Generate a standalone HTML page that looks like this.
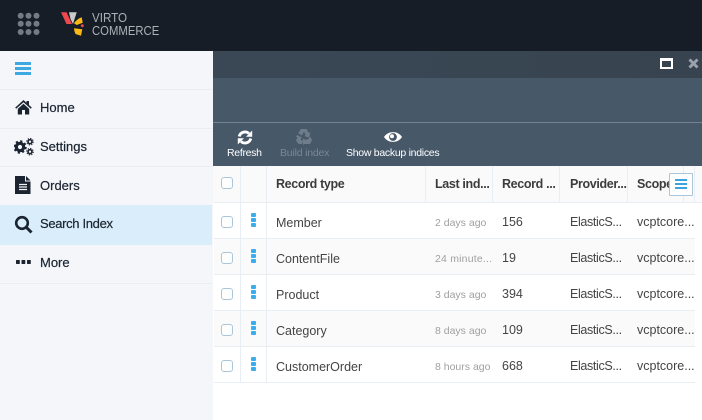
<!DOCTYPE html>
<html><head><meta charset="utf-8"><style>
*{box-sizing:border-box}
html,body{margin:0;padding:0;width:702px;height:420px;overflow:hidden;background:#fff;font-family:"Liberation Sans",sans-serif}
.a{position:absolute}
.t{position:absolute;white-space:nowrap;line-height:16px}
.nav{font-size:13px;color:#1b2430;left:40px;-webkit-text-stroke:.2px #1b2430}
.hl{position:absolute;left:0;width:213px;height:1px;background:#e9edf4}
.tb{font-size:10.5px;color:#fff;top:146px;line-height:14px}
.th{font-size:12.5px;font-weight:bold;color:#3c3c3c;top:176px;letter-spacing:-.35px}
.td{font-size:12.5px;color:#444}
.e{letter-spacing:-.35px}
.sm{font-size:10.5px;color:#a0a0a0}
.cb{position:absolute;left:221px;width:12px;height:12px;border:1.3px solid #a9c6dc;border-radius:3px;background:#fff}
.dot{position:absolute;left:251px;width:5px;height:4.4px;background:#3aaee8;border-radius:1px}
.vl{position:absolute;width:1px;background:#e9edf4}
.row{position:absolute;left:214px;width:481px;height:36px;border-bottom:1px solid #e9edf4}
</style></head><body>
<div class="a" style="left:0;top:0;width:702px;height:51px;background:#161d27"></div>
<svg class="a" style="left:17px;top:12px" width="24" height="24" fill="#747b84"><circle cx="3.700" cy="3.700" r="3"/><circle cx="11.500" cy="3.700" r="3"/><circle cx="19.500" cy="3.700" r="3"/><circle cx="3.700" cy="11.700" r="3"/><circle cx="11.500" cy="11.700" r="3"/><circle cx="19.500" cy="11.700" r="3"/><circle cx="3.700" cy="20" r="3"/><circle cx="11.500" cy="20" r="3"/><circle cx="19.500" cy="20" r="3"/></svg>
<svg class="a" style="left:60px;top:11px" width="28" height="26"><path d="M1 1.300H6.500L12 13H6.500Z" fill="#f1484f"/><path d="M9 1.300H16.700L13 13L10.500 8Z" fill="#c9c9c9"/><path d="M14 12.300Q17 8 21.700 6.300L22.700 11.700L16.700 14Z" fill="#fdb913"/><path d="M14 17.300L22.300 18.300L21 24.700L15.500 23Q14 20 14 17.300Z" fill="#fdb913"/><circle cx="22.300" cy="14.700" r="1.500" fill="#f1484f"/></svg>
<div class="t" style="left:92px;top:10px;font-size:12.500px;color:#adb1b6;transform:scaleX(.93);transform-origin:left">VIRTO</div>
<div class="t" style="left:92px;top:23px;font-size:12.500px;color:#adb1b6;transform:scaleX(.905);transform-origin:left">COMMERCE</div>

<div class="a" style="left:0;top:51px;width:213px;height:369px;background:#f4f6fa"></div>
<div class="a" style="left:0;top:205px;width:212px;height:40px;background:#d9eefa"></div>
<div class="hl" style="top:89px"></div><div class="hl" style="top:128px"></div><div class="hl" style="top:166px"></div><div class="hl" style="top:283px"></div>
<svg class="a" style="left:15px;top:62px" width="17" height="14" fill="#3ea9e0"><rect width="16" height="3" y="0"/><rect width="16" height="3" y="5"/><rect width="16" height="3" y="10"/></svg>
<svg class="a" style="left:15px;top:100px" width="17" height="15" fill="#1b2430"><path d="M8.500 0L11.500 2.700V1H14V5L16.800 7.600L15.800 8.800L8.500 2.200L1.200 8.800L.2 7.600Z"/><path d="M8.500 3.800L14.200 8.900V14.500H10V10H7V14.500H2.800V8.900Z"/></svg>
<svg class="a" style="left:14px;top:137px" width="20" height="20"><circle cx="6" cy="10" r="3.700" fill="none" stroke="#1b2430" stroke-width="3.200"/><circle cx="6" cy="10" r="5.800" fill="none" stroke="#1b2430" stroke-width="1.800" stroke-dasharray="2.200 2.350"/><circle cx="16" cy="4.700" r="2" fill="none" stroke="#1b2430" stroke-width="1.600"/><circle cx="16" cy="4.700" r="3.300" fill="none" stroke="#1b2430" stroke-width="1" stroke-dasharray="1.300 1.300"/><circle cx="16" cy="14.700" r="2" fill="none" stroke="#1b2430" stroke-width="1.600"/><circle cx="16" cy="14.700" r="3.300" fill="none" stroke="#1b2430" stroke-width="1" stroke-dasharray="1.300 1.300"/></svg>
<svg class="a" style="left:15px;top:176px" width="16" height="18"><path d="M0 0H10V5.500H15.500V18H0Z" fill="#1b2430"/><path d="M11 0L15.500 4.500H11Z" fill="#1b2430"/><path d="M4 8.500H12M4 11H12M4 13.500H12" stroke="#f4f6fa" stroke-width="1.200"/></svg>
<svg class="a" style="left:14px;top:215px" width="19" height="19" fill="none" stroke="#1b2430"><circle cx="8" cy="8" r="5.800" stroke-width="2.600"/><path d="M12.500 12.500L17.500 17.500" stroke-width="3"/></svg>
<svg class="a" style="left:16px;top:260px" width="15" height="5" fill="#1b2430"><rect width="3.800" height="4" rx=".6"/><rect x="5.500" width="3.800" height="4" rx=".6"/><rect x="11" width="3.800" height="4" rx=".6"/></svg>
<div class="t nav" style="top:100px">Home</div>
<div class="t nav" style="top:139px">Settings</div>
<div class="t nav" style="top:178px">Orders</div>
<div class="t nav" style="top:216px;letter-spacing:-.33px">Search Index</div>
<div class="t nav" style="top:255px">More</div>

<div class="a" style="left:213px;top:51px;width:489px;height:27px;background:linear-gradient(90deg,#3a4856,#37444f)"></div>
<div class="a" style="left:213px;top:78px;width:489px;height:88px;background:#475869"></div>
<div class="a" style="left:213px;top:122px;width:489px;height:1px;background:#76828f"></div>
<div class="a" style="left:660px;top:58px;width:13px;height:11px;border:2px solid #fff;border-top-width:3px;background:#37444f"></div>
<svg class="a" style="left:688px;top:58px" width="11" height="11" stroke="#9aa3ac" stroke-width="3"><path d="M1.500 1.500L9.500 9.500M9.500 1.500L1.500 9.500"/></svg>
<svg class="a" style="left:237px;top:130px" width="16" height="15" fill="none" stroke="#fff" stroke-width="2.800"><path d="M2.200 6.500A6 6 0 0 1 12 3.500"/><path d="M13.800 8.500A6 6 0 0 1 4 11.500"/><path d="M15.200 .5V6.800H9Z" fill="#fff" stroke="none"/><path d="M.8 14.500V8.200H7Z" fill="#fff" stroke="none"/></svg>
<svg class="a" style="left:295px;top:128px" width="18" height="17" fill="#6f7d8b"><path d="M6 1H11.500L13.800 5L15.500 4.200L14 9.500L9 8L10.800 7L9 3.800L6.800 7.500L3.200 5.300Z"/><path d="M2.500 7L7.200 9.800L5.500 10.800L7 13.500V16H3.500L1 12.500L2.500 9.500L.8 8.500Z"/><path d="M9 11.500H12.800L15.200 8.500L17 12L15 16H9V17.500L6.800 13.500L9 9.800Z"/></svg>
<svg class="a" style="left:384px;top:130px" width="18" height="14"><path d="M0 7C4 .5 14 .5 18 7C14 13.500 4 13.500 0 7Z" fill="#fff"/><circle cx="9" cy="7" r="3.900" fill="#475869"/><circle cx="8" cy="6.200" r="2" fill="#fff"/></svg>
<div class="t tb" style="left:227px;letter-spacing:-.3px">Refresh</div>
<div class="t tb" style="left:280px;color:#7b8794;letter-spacing:-.2px">Build index</div>
<div class="t tb" style="left:346px;letter-spacing:-.28px">Show backup indices</div>

<div class="a" style="left:213px;top:166px;width:489px;height:37px;background:#fafafa"></div>
<div class="a" style="left:214px;top:202px;width:488px;height:1px;background:#e9edf4"></div>
<div class="row" style="top:203px;background:#fff"></div>
<div class="row" style="top:239px;background:#fafafa"></div>
<div class="row" style="top:275px;background:#fff"></div>
<div class="row" style="top:311px;background:#fafafa"></div>
<div class="row" style="top:347px;background:#fff"></div>
<div class="vl" style="left:240px;top:166px;height:217px"></div>
<div class="vl" style="left:266px;top:166px;height:217px"></div>
<div class="vl" style="left:425px;top:166px;height:36px"></div>
<div class="vl" style="left:492px;top:166px;height:36px"></div>
<div class="vl" style="left:559px;top:166px;height:36px"></div>
<div class="vl" style="left:627px;top:166px;height:36px"></div>
<div class="vl" style="left:683px;top:166px;height:36px"></div>
<div class="vl" style="left:694px;top:166px;height:36px"></div>

<div class="t th" style="left:276px">Record type</div>
<div class="t th" style="left:435px">Last ind...</div>
<div class="t th" style="left:502px">Record ...</div>
<div class="t th" style="left:570px">Provider...</div>
<div class="t th" style="left:637px;width:33px;overflow:hidden">Scope</div>
<div class="a" style="left:669px;top:173px;width:24px;height:23px;background:#fff;border:1px solid #a9c6dc;border-radius:1px"></div>
<svg class="a" style="left:675px;top:178px" width="13" height="13" fill="#38a5de"><rect width="12" height="2" y="1"/><rect width="12" height="2" y="5"/><rect width="12" height="2" y="9"/></svg>

<div class="cb" style="top:177px"></div><div class="cb" style="top:216px"></div><div class="cb" style="top:252px"></div><div class="cb" style="top:288px"></div><div class="cb" style="top:324px"></div><div class="cb" style="top:360px"></div>

<div class="dot" style="top:213px"></div><div class="dot" style="top:218px"></div><div class="dot" style="top:223px"></div>
<div class="dot" style="top:249px"></div><div class="dot" style="top:254px"></div><div class="dot" style="top:259px"></div>
<div class="dot" style="top:285px"></div><div class="dot" style="top:290px"></div><div class="dot" style="top:295px"></div>
<div class="dot" style="top:321px"></div><div class="dot" style="top:326px"></div><div class="dot" style="top:331px"></div>
<div class="dot" style="top:357px"></div><div class="dot" style="top:362px"></div><div class="dot" style="top:367px"></div>

<div class="t td" style="left:276px;top:215px">Member</div><div class="t sm" style="left:435px;top:215px">2 days ago</div><div class="t td" style="left:502px;top:214px">156</div><div class="t td e" style="left:570px;top:214px">ElasticS...</div><div class="t td" style="left:637px;top:214px">vcptcore...</div>
<div class="t td" style="left:276px;top:251px">ContentFile</div><div class="t sm" style="left:435px;top:251px;letter-spacing:.2px">24 minute...</div><div class="t td" style="left:502px;top:250px">19</div><div class="t td e" style="left:570px;top:250px">ElasticS...</div><div class="t td" style="left:637px;top:250px">vcptcore...</div>
<div class="t td" style="left:276px;top:287px">Product</div><div class="t sm" style="left:435px;top:287px">3 days ago</div><div class="t td" style="left:502px;top:286px">394</div><div class="t td e" style="left:570px;top:286px">ElasticS...</div><div class="t td" style="left:637px;top:286px">vcptcore...</div>
<div class="t td" style="left:276px;top:323px">Category</div><div class="t sm" style="left:435px;top:323px">8 days ago</div><div class="t td" style="left:502px;top:322px">109</div><div class="t td e" style="left:570px;top:322px">ElasticS...</div><div class="t td" style="left:637px;top:322px">vcptcore...</div>
<div class="t td" style="left:276px;top:359px">CustomerOrder</div><div class="t sm" style="left:435px;top:359px">8 hours ago</div><div class="t td" style="left:502px;top:358px">668</div><div class="t td e" style="left:570px;top:358px">ElasticS...</div><div class="t td" style="left:637px;top:358px">vcptcore...</div>
</body></html>
